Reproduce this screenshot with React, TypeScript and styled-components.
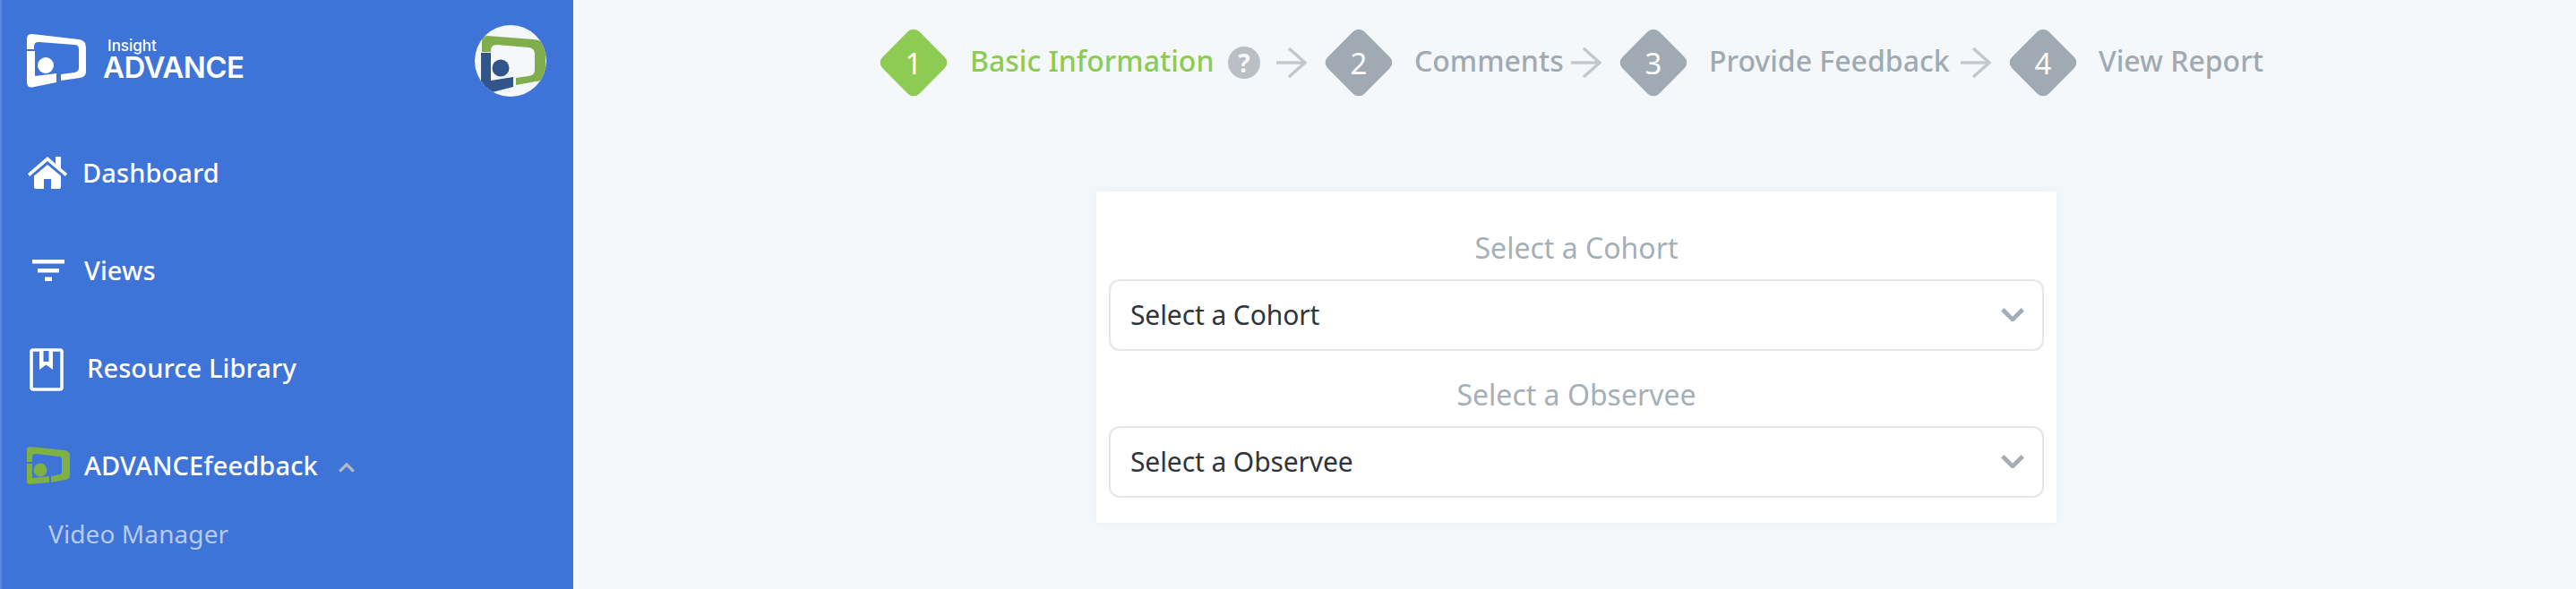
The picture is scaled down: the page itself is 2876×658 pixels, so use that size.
import React from "react";
import styled, { createGlobalStyle } from "styled-components";

const Global = createGlobalStyle`
  html, body { margin: 0; padding: 0; background: #f4f8fb; }
  body { font-family: "Noto Sans", "Open Sans", sans-serif; }
`;

const Page = styled.div`
  display: flex;
  width: 2876px;
  height: 658px;
  overflow: hidden;
  background: #f4f8fb;
`;

const Sidebar = styled.aside`
  width: 640px;
  height: 658px;
  flex: none;
  box-sizing: border-box;
  background: #3e73d7;
  border-left: 2px solid #5c8ade;
  padding: 28px 30px 0 28px;
  display: flex;
  flex-direction: column;
`;

const Brand = styled.div`
  display: flex;
  align-items: flex-start;
  justify-content: space-between;
  height: 110px;
  flex: none;
`;

const BrandMark = styled.div`
  display: flex;
  margin-top: 10px;
  gap: 19px;
`;

const Wordmark = styled.div`
  display: flex;
  flex-direction: column;
  font-family: Inter, "Liberation Sans", Arial, sans-serif;
  color: #fff;
  line-height: 1;
`;

const Insight = styled.span`
  font-size: 17px;
  font-weight: 500;
  margin: 4px 0 0 5px;
  line-height: 18px;
`;

const Advance = styled.span`
  font-size: 33px;
  font-weight: 600;
  letter-spacing: -0.6px;
  line-height: 30px;
`;

const Avatar = styled.div`
  width: 80px;
  height: 80px;
  border-radius: 50%;
  background: #f4f8fb;
  overflow: hidden;
`;

const NavItem = styled.div`
  display: flex;
  align-items: center;
  height: 109px;
  flex: none;
  color: #fff;
  font-size: 29px;
  font-weight: 500;
  letter-spacing: 0.1px;
  white-space: nowrap;
`;

const IconSlot = styled.span<{ $w: number; $pad?: number; $mt?: number }>`
  display: flex;
  align-items: center;
  width: ${(p) => p.$w}px;
  padding-left: ${(p) => p.$pad ?? 0}px;
  margin-top: ${(p) => p.$mt ?? 0}px;
  box-sizing: border-box;
  flex: none;
`;

const SubItem = styled.div`
  color: #b7caef;
  font-size: 28px;
  padding-left: 24px;
  margin-top: 3px;
  line-height: 38px;
  letter-spacing: 0.1px;
`;

const Main = styled.main`
  flex: 1;
  display: flex;
  flex-direction: column;
  align-items: flex-start;
`;

const Steps = styled.div`
  display: flex;
  align-items: center;
  margin: 33px 0 0 343px;
  height: 74px;
`;

const Diamond = styled.span<{ $active?: boolean }>`
  width: 74px;
  height: 74px;
  flex: none;
  position: relative;
  display: flex;
  align-items: center;
  justify-content: center;
  color: #fff;
  font-size: 33px;
  &::before {
    content: "";
    position: absolute;
    left: 8px;
    top: 8px;
    width: 58px;
    height: 58px;
    border-radius: 9px;
    transform: rotate(45deg);
    background: ${(p) => (p.$active ? "#8dcb52" : "#a1aab2")};
  }
`;

const DiamondNum = styled.span`
  position: relative;
`;

const StepLabel = styled.span<{ $active?: boolean; $ml: number; $w: number }>`
  margin-left: ${(p) => p.$ml}px;
  width: ${(p) => p.$w}px;
  flex: none;
  font-size: 32px;
  line-height: 40px;
  padding-bottom: 4px;
  color: ${(p) => (p.$active ? "#8dcb52" : "#a1aab2")};
  font-weight: 500;
  white-space: nowrap;
`;

const ArrowSlot = styled.span<{ $ml: number; $mr: number; $mt?: number }>`
  display: flex;
  margin: ${(p) => p.$mt ?? 0}px ${(p) => p.$mr}px 0 ${(p) => p.$ml}px;
  flex: none;
`;

const Help = styled.span`
  width: 36px;
  height: 36px;
  margin-left: 18px;
  flex: none;
  border-radius: 50%;
  background: #b9bfc5;
  color: #f4f8fb;
  font-size: 28px;
  font-weight: 700;
  line-height: 36px;
  text-align: center;
`;

const Card = styled.section`
  width: 1072px;
  height: 370px;
  margin: 107px 0 0 584px;
  box-sizing: border-box;
  padding: 42px 14px 0;
  background: #fff;
  box-shadow: 0 0 12px rgba(200, 210, 220, 0.25);
`;

const Field = styled.div`
  margin-bottom: 28px;
`;

const Label = styled.div`
  text-align: center;
  font-size: 32px;
  line-height: 42px;
  color: #a5afb7;
  height: 56px;
`;

const Select = styled.div`
  height: 80px;
  box-sizing: border-box;
  border: 2px solid #e4e7ea;
  border-radius: 12px;
  padding: 0 20px 1px 22px;
  display: flex;
  align-items: center;
  justify-content: space-between;
  font-size: 30px;
  letter-spacing: -0.1px;
  color: #2f353a;
`;

const Logo = () => (
  <svg width="66" height="60" viewBox="0 0 66 60" fill="#fff">
    <path d="M0 17 V5 Q0 0 6 0 L58 6 Q66 7 66 15 V42 Q66 48 59 49 L38 52 V45 L53 43 Q58 42 58 38 V17 Q58 12 53 12 L14 9 Q8 8.5 8 14 V17 Z" />
    <path d="M0 19 H9 V47 L33 44 V54 L6 59.5 Q0 60 0 54 Z" />
    <circle cx="21" cy="35" r="9" />
  </svg>
);

const AvatarArt = () => (
  <svg width="80" height="80" viewBox="0 0 80 80" fill="none">
    <path d="M8 30 V18 Q8 12 14 12 L66 16 Q79 17 79 28 V56 Q79 62 68 63 L46 67 V59 L60 57 Q67 56 67 50 V32 Q67 26 60 25 L25 22 Q18 22 18 28 V30 Z" fill="#81ae4d" />
    <path d="M7 31 H18 V62 L43 58 V69 L16 76 Q7 70 7 62 Z" fill="#31548b" />
    <circle cx="29" cy="48" r="9.5" fill="#31548b" />
  </svg>
);

const HomeIcon = () => (
  <svg width="44" height="36" viewBox="0 0 44 36" fill="#fff">
    <path d="M22 0 L31 8 V0 H37 V13 L44 19 L42 22 L22 5 L2 22 L0 19 Z" />
    <path d="M22 9 L37 21.5 V34 Q37 36 35 36 H26 V25 H18 V36 H9 Q7 36 7 34 V21.5 Z" />
  </svg>
);

const FilterIcon = () => (
  <svg width="36" height="24" viewBox="0 0 36 24" fill="#fff">
    <rect x="0" y="0" width="36" height="4.5" />
    <rect x="6" y="10" width="24" height="4.5" />
    <rect x="14" y="19.5" width="8" height="4.5" />
  </svg>
);

const BookIcon = () => (
  <svg width="38" height="48" viewBox="0 0 38 48" fill="none">
    <rect x="2" y="2" width="34" height="44" rx="2" stroke="#fff" strokeWidth="3.6" />
    <path d="M11 2 V24 L18.5 18.5 L26 24 V2" fill="#fff" />
    <path d="M15.5 3 V15 H21.5 V3 Z" fill="#3e73d7" />
  </svg>
);

const GreenLogo = () => (
  <svg width="48" height="42" viewBox="0 0 48 42" fill="#7fb043">
    <path d="M0 3 Q0 0 3 0 L42 4 Q48 5 48 10 V32 Q48 36 43 37 L27 40 V33 L37 31 Q39 30 39 28 V14 Q39 11 36 11 L10 8 Q6 8 6 12 V17 H0 Z" />
    <path d="M0 19 H6 V35 L25 33 V40 L3 42 Q0 42 0 39 Z" />
    <circle cx="15" cy="26" r="7.5" />
  </svg>
);

const Arrow = () => (
  <svg width="34" height="34" viewBox="0 0 34 34" fill="none" stroke="#c3c8cd" strokeWidth="3.4">
    <path d="M0 17 H32" />
    <path d="M14 1 L32 17 L14 33" />
  </svg>
);

const Chevron = ({ w, color, up }: { w: number; color: string; up?: boolean }) => (
  <svg width={w} height={w * 0.6} viewBox="0 0 30 18" fill="none" stroke={color} strokeWidth="5.4">
    <path d={up ? "M2 16 L15 3 L28 16" : "M2 2 L15 15 L28 2"} />
  </svg>
);

const stepsData = [
  { n: "1", label: "Basic Information", w: 270, ml: 26, active: true },
  { n: "2", label: "Comments", w: 167, ml: 25 },
  { n: "3", label: "Provide Feedback", w: 273, ml: 25 },
  { n: "4", label: "View Report", w: 185, ml: 25 },
];

export default function App() {
  return (
    <Page>
      <Global />
      <Sidebar>
        <Brand>
          <BrandMark>
            <Logo />
            <Wordmark>
              <Insight>Insight</Insight>
              <Advance>ADVANCE</Advance>
            </Wordmark>
          </BrandMark>
          <Avatar>
            <AvatarArt />
          </Avatar>
        </Brand>
        <NavItem>
          <IconSlot $w={62} $pad={1}><HomeIcon /></IconSlot>
          Dashboard
        </NavItem>
        <NavItem>
          <IconSlot $w={64} $pad={6}><FilterIcon /></IconSlot>
          Views
        </NavItem>
        <NavItem>
          <IconSlot $w={67} $pad={3} $mt={5}><BookIcon /></IconSlot>
          Resource Library
        </NavItem>
        <NavItem>
          <IconSlot $w={64}><GreenLogo /></IconSlot>
          ADVANCEfeedback
          <ArrowSlot $ml={23} $mr={0} $mt={6}>
            <Chevron w={18} color="#b2bbc4" up />
          </ArrowSlot>
        </NavItem>
        <SubItem>Video Manager</SubItem>
      </Sidebar>
      <Main>
        <Steps>
          {stepsData.map((s, i) => (
            <React.Fragment key={s.n}>
              <Diamond $active={s.active}>
                <DiamondNum>{s.n}</DiamondNum>
              </Diamond>
              <StepLabel $active={s.active} $ml={s.ml} $w={s.w}>
                {s.label}
              </StepLabel>
              {s.active && <Help>?</Help>}
              {i < 3 && (
                <ArrowSlot $ml={s.active ? 18 : 8} $mr={21}>
                  <Arrow />
                </ArrowSlot>
              )}
            </React.Fragment>
          ))}
        </Steps>
        <Card>
          <Field>
            <Label>Select a Cohort</Label>
            <Select>
              Select a Cohort
              <Chevron w={26} color="#a3adb5" />
            </Select>
          </Field>
          <Field>
            <Label>Select a Observee</Label>
            <Select>
              Select a Observee
              <Chevron w={26} color="#a3adb5" />
            </Select>
          </Field>
        </Card>
      </Main>
    </Page>
  );
}
